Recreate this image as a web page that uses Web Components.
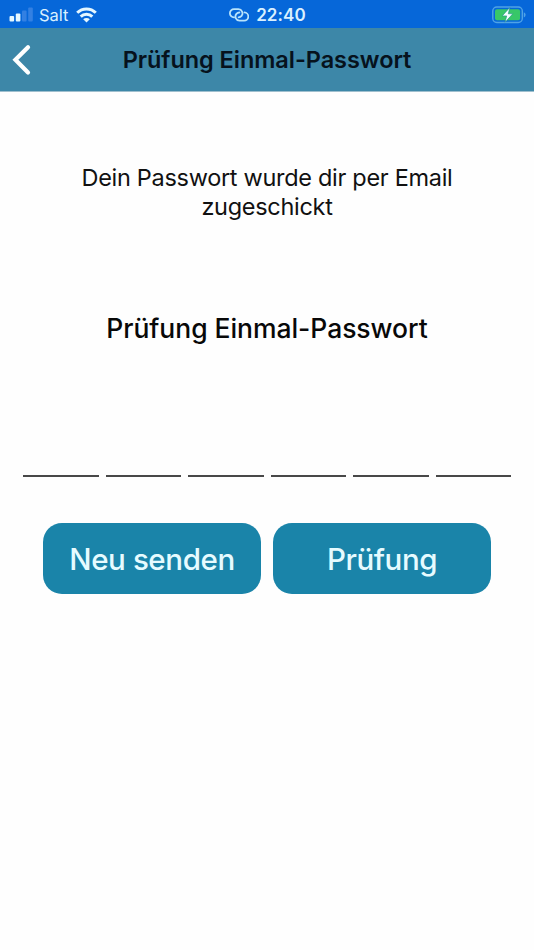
<!DOCTYPE html>
<html lang="de">
<head>
<meta charset="utf-8">
<title>Prüfung Einmal-Passwort</title>
<style>
    body {
        margin: 0;
        background: #fefefe;
        color: #111;
        font-family: Inter, "Liberation Sans", sans-serif;
    }
</style>
</head>
<body>
<otp-screen>
    <status-bar slot="top" carrier="Salt" time="22:40"></status-bar>
    <nav-header slot="top">Prüfung Einmal-Passwort</nav-header>
    <info-text>Dein Passwort wurde dir per Email zugeschickt</info-text>
    <screen-heading>Prüfung Einmal-Passwort</screen-heading>
    <code-input length="6"></code-input>
    <button-row>
        <action-button>Neu senden</action-button>
        <action-button>Prüfung</action-button>
    </button-row>
</otp-screen>

<script>
/**
 * Attach an open shadow root with the given markup.
 */
function render (el, html) {
    const template = document.createElement('template');
    template.innerHTML = html;
    el.attachShadow({ mode: 'open' }).appendChild(template.content.cloneNode(true));
}

/**
 * Full height screen: bars on top, content below.
 */
class OtpScreen extends HTMLElement {
    constructor () {
        super();
        render(this, `
<style>
    :host {
        display: flex;
        flex-direction: column;
        height: 950px;
    }
    main {
        display: flex;
        flex-direction: column;
        padding-top: 72px;
    }
</style>
<slot name="top"></slot>
<main><slot></slot></main>
`);
    }
}

/**
 * Phone status bar with signal, clock and battery.
 */
class StatusBar extends HTMLElement {
    constructor () {
        super();
        render(this, `
<style>
    :host {
        display: grid;
        grid-template-columns: 1fr auto 1fr;
        align-items: center;
        box-sizing: border-box;
        height: 28px;
        padding: 1px 8px 0 9px;
        background: #0667d9;
        color: #d9f0ff;
    }
    div {
        display: flex;
        align-items: center;
    }
    svg {
        display: block;
    }
    .carrier {
        margin: 0 7px 0 6px;
        font-size: 16.5px;
        line-height: 20px;
    }
    .time {
        margin-left: 7px;
        font-size: 17px;
        font-weight: 600;
        line-height: 20px;
        letter-spacing: .1px;
    }
    .right {
        justify-content: flex-end;
    }
</style>
<div>
    <svg width="24" height="16" viewBox="0 0 24 16">
        <rect x=".5" y="9" width="4.6" height="5.5" rx="1" fill="#e4f7ff"/>
        <rect x="6.8" y="6.5" width="4.6" height="8" rx="1" fill="#e4f7ff"/>
        <rect x="13" y="3.5" width="4.6" height="11" rx="1" fill="#3380e2"/>
        <rect x="19.2" y=".5" width="4.6" height="14" rx="1" fill="#3380e2"/>
    </svg>
    <span class="carrier"></span>
    <svg width="21" height="16" viewBox="0 0 21 16" fill="none" stroke="#e4f7ff" stroke-width="3">
        <path d="M1.200 5.800a13.200 13.200 0 0 1 18.600 0"/>
        <path d="M4.700 9.600a8.200 8.200 0 0 1 11.600 0"/>
        <path d="M10.500 15.600L7.200 12.300a4.600 4.600 0 0 1 6.600 0z" fill="#e4f7ff" stroke="none"/>
    </svg>
</div>
<div>
    <svg width="20" height="14" viewBox="0 0 20 14" fill="none" stroke="#b9e4fb" stroke-width="1.8" stroke-linecap="round">
        <path d="M5 9.400A4 4 0 0 1 5 1.200h4.400a4.100 4.100 0 0 1 3.200 6.700q-1.200 1.300-3 1.400"/>
        <path d="M15.400 4.400a4.100 4.100 0 0 1-.4 8.200h-4.400a4.100 4.100 0 0 1-3.200-6.700q1.200-1.300 3-1.400"/>
    </svg>
    <span class="time"></span>
</div>
<div class="right">
    <svg width="34" height="18" viewBox="0 0 34 18">
        <rect x=".8" y="1" width="29.500" height="15.500" rx="4" fill="none" stroke="#4fa3e6" stroke-width="1.400"/>
        <rect x="3" y="3.200" width="25.100" height="11.100" rx="2" fill="#38c768"/>
        <path d="M31.800 6.200q1.800.6 1.800 2.600t-1.800 2.600z" fill="#4fa3e6"/>
        <path d="M17.800 1.600L10.200 9.900h4.500l-1.600 6.300 7.700-8.400h-4.500z" fill="#f4ffff" stroke="#1f8f8a" stroke-width=".6"/>
    </svg>
</div>
`);
    }

    connectedCallback () {
        this.shadowRoot.querySelector('.carrier').textContent = this.getAttribute('carrier');
        this.shadowRoot.querySelector('.time').textContent = this.getAttribute('time');
    }
}

/**
 * Title bar with a back chevron.
 */
class NavHeader extends HTMLElement {
    constructor () {
        super();
        render(this, `
<style>
    :host {
        display: grid;
        grid-template-columns: 48px 1fr 48px;
        align-items: center;
        height: 64px;
        padding-top: 1px;
        background: #3d87a8;
        border-bottom: 1px solid #9fbfce;
        box-sizing: border-box;
        color: #06121d;
    }
    button {
        display: block;
        padding: 0 0 0 12px;
        border: none;
        background: none;
    }
    svg {
        display: block;
    }
    h1 {
        margin: 0;
        font-size: 23.5px;
        font-weight: 600;
        line-height: 30px;
        letter-spacing: -.05px;
        text-align: center;
        white-space: nowrap;
    }
</style>
<button type="button" aria-label="Zurück">
    <svg width="20" height="32" viewBox="0 0 20 32" fill="none" stroke="#fff" stroke-width="4.200" stroke-linecap="round">
        <path d="M16 3.200L3.400 15.800 16 28.400"/>
    </svg>
</button>
<h1><slot></slot></h1>
`);
    }
}

class InfoText extends HTMLElement {
    constructor () {
        super();
        render(this, `
<style>
    :host {
        display: block;
        padding: 0 76px;
        font-size: 23.5px;
        line-height: 28.5px;
        letter-spacing: -.3px;
        text-align: center;
    }
</style>
<slot></slot>
`);
    }
}

class ScreenHeading extends HTMLElement {
    constructor () {
        super();
        render(this, `
<style>
    :host {
        display: block;
        margin-top: 90px;
        color: #080808;
    }
    h2 {
        margin: 0;
        font-size: 26.5px;
        font-weight: 500;
        line-height: 34px;
        letter-spacing: -.05px;
        text-align: center;
        white-space: nowrap;
    }
</style>
<h2><slot></slot></h2>
`);
    }
}

/**
 * Row of underlined cells, one per digit.
 */
class CodeInput extends HTMLElement {
    constructor () {
        super();
        render(this, `
<style>
    :host {
        display: flex;
        gap: 7px;
        margin-top: 72px;
        padding: 0 23px;
    }
    input {
        flex: 1;
        min-width: 0;
        box-sizing: border-box;
        height: 60px;
        padding: 0;
        border: none;
        border-bottom: 2px solid #484848;
        border-radius: 0;
        background: none;
        font: inherit;
        font-size: 28px;
        text-align: center;
    }
</style>
`);
    }

    connectedCallback () {
        const length = parseInt(this.getAttribute('length'), 10) || 6;
        for (let i = 0; i < length; i++) {
            const input = document.createElement('input');
            input.inputMode = 'numeric';
            input.maxLength = 1;
            this.shadowRoot.appendChild(input);
        }
    }
}

class ButtonRow extends HTMLElement {
    constructor () {
        super();
        render(this, `
<style>
    :host {
        display: flex;
        gap: 12px;
        margin-top: 45.5px;
        padding: 0 43px;
    }
    ::slotted(*) {
        flex: 1;
    }
</style>
<slot></slot>
`);
    }
}

class ActionButton extends HTMLElement {
    constructor () {
        super();
        render(this, `
<style>
    :host {
        display: block;
    }
    button {
        display: block;
        width: 100%;
        height: 71.5px;
        padding: 1px 0 0;
        border: none;
        border-radius: 19px;
        background: #1a84a9;
        color: #e6fbff;
        font: inherit;
        font-size: 29.5px;
        font-weight: 500;
        letter-spacing: -.4px;
        white-space: nowrap;
    }
</style>
<button type="button"><slot></slot></button>
`);
    }
}

window.customElements.define('otp-screen', OtpScreen);
window.customElements.define('status-bar', StatusBar);
window.customElements.define('nav-header', NavHeader);
window.customElements.define('info-text', InfoText);
window.customElements.define('screen-heading', ScreenHeading);
window.customElements.define('code-input', CodeInput);
window.customElements.define('button-row', ButtonRow);
window.customElements.define('action-button', ActionButton);
</script>
</body>
</html>
